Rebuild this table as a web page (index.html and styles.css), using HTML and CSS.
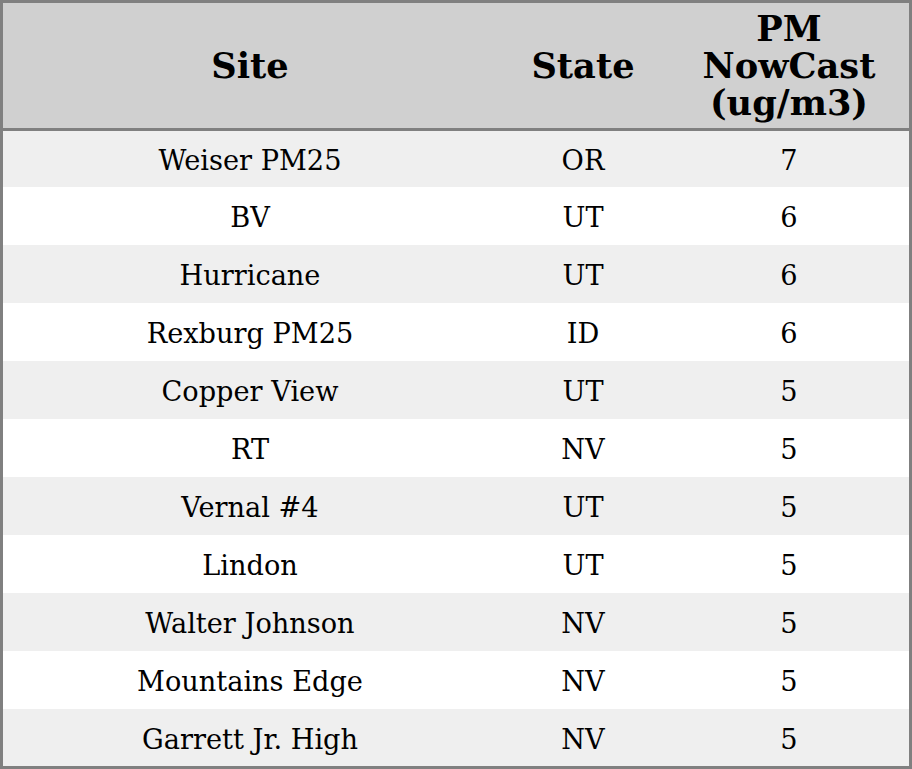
FILE: index.html
```html
<!DOCTYPE html>
<html>
<head>
<meta charset="utf-8">
<link rel="stylesheet" href="styles.css">
</head>
<body>
<div class="frame">
<table class="aq">
<colgroup><col class="c1"><col class="c2"><col class="c3"></colgroup>
<thead>
<tr><th>Site</th><th>State</th><th>PM<br>NowCast<br>(ug/m3)</th></tr>
</thead>
<tbody>
<tr><td>Weiser PM25</td><td>OR</td><td>7</td></tr>
<tr><td>BV</td><td>UT</td><td>6</td></tr>
<tr><td>Hurricane</td><td>UT</td><td>6</td></tr>
<tr><td>Rexburg PM25</td><td>ID</td><td>6</td></tr>
<tr><td>Copper View</td><td>UT</td><td>5</td></tr>
<tr><td>RT</td><td>NV</td><td>5</td></tr>
<tr><td>Vernal #4</td><td>UT</td><td>5</td></tr>
<tr><td>Lindon</td><td>UT</td><td>5</td></tr>
<tr><td>Walter Johnson</td><td>NV</td><td>5</td></tr>
<tr><td>Mountains Edge</td><td>NV</td><td>5</td></tr>
<tr><td>Garrett Jr. High</td><td>NV</td><td>5</td></tr>
</tbody>
</table>
</div>
</body>
</html>
```
FILE: styles.css
```css
html, body {
  margin: 0;
  padding: 0;
  background: #ffffff;
}
.frame {
  box-sizing: border-box;
  width: 912px;
  height: 769px;
  border: 3px solid #808080;
  overflow: hidden;
}
.aq {
  width: 906px;
  border-collapse: separate;
  border-spacing: 0;
  table-layout: fixed;
  font-family: "DejaVu Serif", serif;
  color: #000;
}
.c1 { width: 494px; }
.c2 { width: 172px; }
.c3 { width: 240px; }
.aq th {
  height: 125px;
  padding: 0;
  box-sizing: border-box;
  background: #d0d0d0;
  border-bottom: 3px solid #808080;
  font-size: 35.2px;
  font-weight: bold;
  line-height: 37px;
  text-align: center;
  vertical-align: middle;
}
.aq thead tr { height: 128px; }
.aq td {
  padding: 4px 0 0 0;
  font-size: 27.2px;
  line-height: 32px;
  text-align: center;
  vertical-align: middle;
}
.aq tbody tr { height: 58px; }
.aq tbody tr:first-child { height: 56px; }
.aq tbody tr:last-child { height: 57px; }
.aq tbody tr:nth-child(odd) td { background: #efefef; }
.aq tbody tr:nth-child(even) td { background: #ffffff; }
```
